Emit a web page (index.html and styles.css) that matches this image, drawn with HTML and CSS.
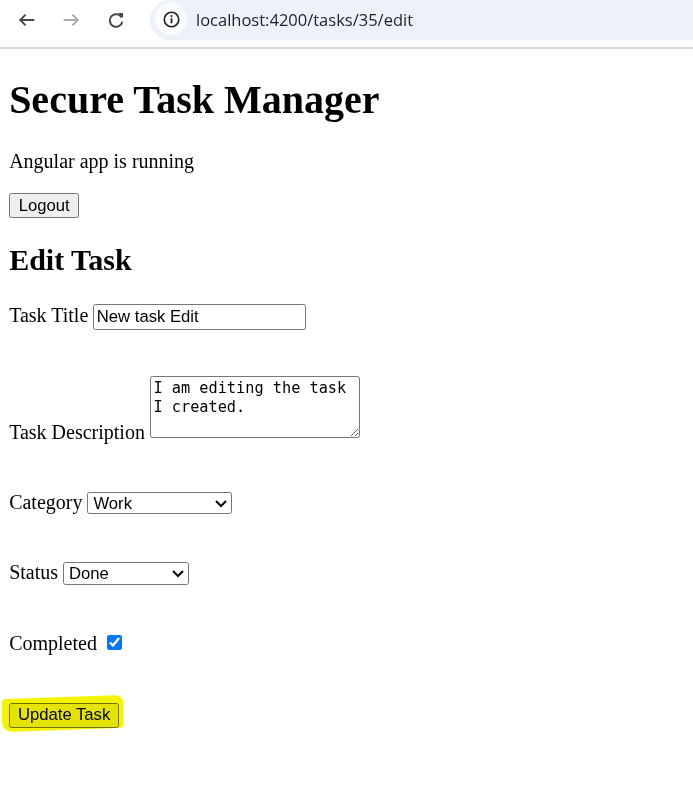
FILE: index.html
```html
<!DOCTYPE html>
<html lang="en">
<head>
<meta charset="utf-8">
<title>Secure Task Manager</title>
<link rel="stylesheet" href="styles.css">
</head>
<body>
<header class="chrome">
  <div class="nav">
    <svg class="nav-icon back" viewBox="0 0 20 20"><path d="M18.3 10H4.2M9.6 4.6L4.2 10l5.4 5.4"/></svg>
    <svg class="nav-icon fwd" viewBox="0 0 20 20"><path d="M2.7 10h14.1M11.4 4.6l5.4 5.4-5.4 5.4"/></svg>
    <svg class="nav-icon reload" viewBox="0 0 20 20"><path d="M15.6 7.4A6.3 6.3 0 1 0 16.3 11.6"/><path class="reload-head" d="M12 2.9h5v5z"/></svg>
  </div>
  <div class="omnibox">
    <span class="info-chip">
      <svg class="info-icon" viewBox="0 0 20 20"><circle cx="10" cy="10" r="7.6" fill="none" stroke="#1f1f1f" stroke-width="1.7"/><rect x="9.1" y="8.6" width="1.8" height="5.4" fill="#1f1f1f"/><circle cx="10" cy="6.4" r="1.1" fill="#1f1f1f"/></svg>
    </span>
    <span class="url">localhost:4200/tasks/35/edit</span>
  </div>
</header>
<div class="page">
  <h1>Secure Task Manager</h1>
  <p>Angular app is running</p>
  <div><button class="btn btn-logout" type="button">Logout</button></div>
  <h2>Edit Task</h2>
  <form class="task-form">
    <div class="row"><label for="title">Task Title</label> <input id="title" class="text-input" type="text" value="New task Edit"></div>
    <div class="row row-desc"><label for="desc">Task Description</label> <textarea id="desc" class="desc">I am editing the task I created.</textarea></div>
    <div class="row row-cat"><label for="cat">Category</label> <select id="cat" class="sel sel-cat"><option>Work</option><option>Personal</option><option>Shopping</option></select></div>
    <div class="row row-status"><label for="status">Status</label> <select id="status" class="sel sel-status"><option>To Do</option><option>In Progress</option><option selected>Done</option></select></div>
    <div class="row row-done"><label for="done">Completed</label> <input id="done" class="check" type="checkbox" checked></div>
    <div class="row"><span class="hl-wrap"><span class="highlight"></span><button class="btn btn-update" type="submit">Update Task</button></span></div>
  </form>
</div>
</body>
</html>
```
FILE: styles.css
```css
html, body {
  margin: 0;
  padding: 0;
  background: #ffffff;
}
body {
  font-family: "Liberation Serif", "Times New Roman", serif;
  color: #000;
}
.chrome {
  height: 47px;
  border-bottom: 2px solid #dcdcdc;
  display: flex;
  align-items: flex-start;
  background: #fff;
}
.nav {
  display: flex;
  align-items: center;
  gap: 25px;
  padding-left: 16px;
  height: 39px;
}
.nav-icon {
  width: 20px;
  height: 20px;
  fill: none;
  stroke-width: 1.9;
  stroke-linecap: butt;
  stroke-linejoin: miter;
}
.back { stroke: #474747; }
.fwd { stroke: #a9a9a9; }
.reload { stroke: #474747; width: 20px; height: 20px; stroke-width: 2; }
.reload .reload-head { fill: #474747; stroke: none; }
.omnibox {
  margin-left: 24px;
  flex: 1;
  height: 40px;
  background: #edf2fa;
  border-radius: 20px 0 0 20px;
  display: flex;
  align-items: center;
  padding-left: 5px;
}
.info-chip {
  width: 32px;
  height: 32px;
  border-radius: 50%;
  background: #fbfcfe;
  display: flex;
  align-items: center;
  justify-content: center;
  margin-top: -2px;
}
.info-icon { width: 19px; height: 19px; }
.url {
  margin-left: 9px;
  font-family: "Open Sans", "Noto Sans", sans-serif;
  font-size: 16.5px;
  color: #1f1f1f;
  margin-top: -2px;
}

.page {
  zoom: 1.25;
  margin: 8px 7.3px;
}
.btn {
  font-family: "Liberation Sans", Arial, sans-serif;
  font-size: 13.33px;
  height: 20px;
  padding: 0 6px;
  border: 1px solid #767676;
  border-radius: 2px;
  background: #efefef;
  color: #000;
}
.btn-logout { width: 56px; }
.btn-update { width: 88px; position: relative; }
.task-form { padding-top: 1.6px; }
.row { margin-bottom: 37px; }
.row-desc { margin-bottom: 37.8px; }
.row-cat { margin-bottom: 37.8px; }
.row-status { margin-bottom: 37px; }
.row-done { margin-bottom: 37.8px; }
.text-input {
  box-sizing: border-box;
  width: 170px;
  height: 20.4px;
  padding: 1px 2px;
  border: 1px solid #767676;
  border-radius: 2px;
  font-family: "Liberation Sans", Arial, sans-serif;
  font-size: 13.33px;
}
.desc {
  box-sizing: border-box;
  width: 168px;
  height: 50px;
  padding: 2px;
  border: 1px solid #767676;
  border-radius: 2px;
  font-family: "DejaVu Sans Mono", "Liberation Mono", monospace;
  font-size: 12.2px;
  line-height: 15.2px;
  vertical-align: baseline;
}
.sel {
  height: 18px;
  border: 1px solid #767676;
  border-radius: 2px;
  background: #fff;
  font-family: "Liberation Sans", Arial, sans-serif;
  font-size: 13.33px;
  padding: 0;
}
.sel-cat { width: 116px; }
.sel-status { width: 101px; }
.check {
  width: 12px;
  height: 12px;
  margin: 3px 3px 3px 4px;
}
.hl-wrap {
  position: relative;
  display: inline-block;
}
.highlight {
  position: absolute;
  left: -6px;
  top: -4px;
  width: 97px;
  height: 26px;
  background: #f4f400;
  border-radius: 3px 6px 3px 8px;
  transform: skewY(-2deg);
  z-index: 2;
  mix-blend-mode: multiply;
  pointer-events: none;
}
```
